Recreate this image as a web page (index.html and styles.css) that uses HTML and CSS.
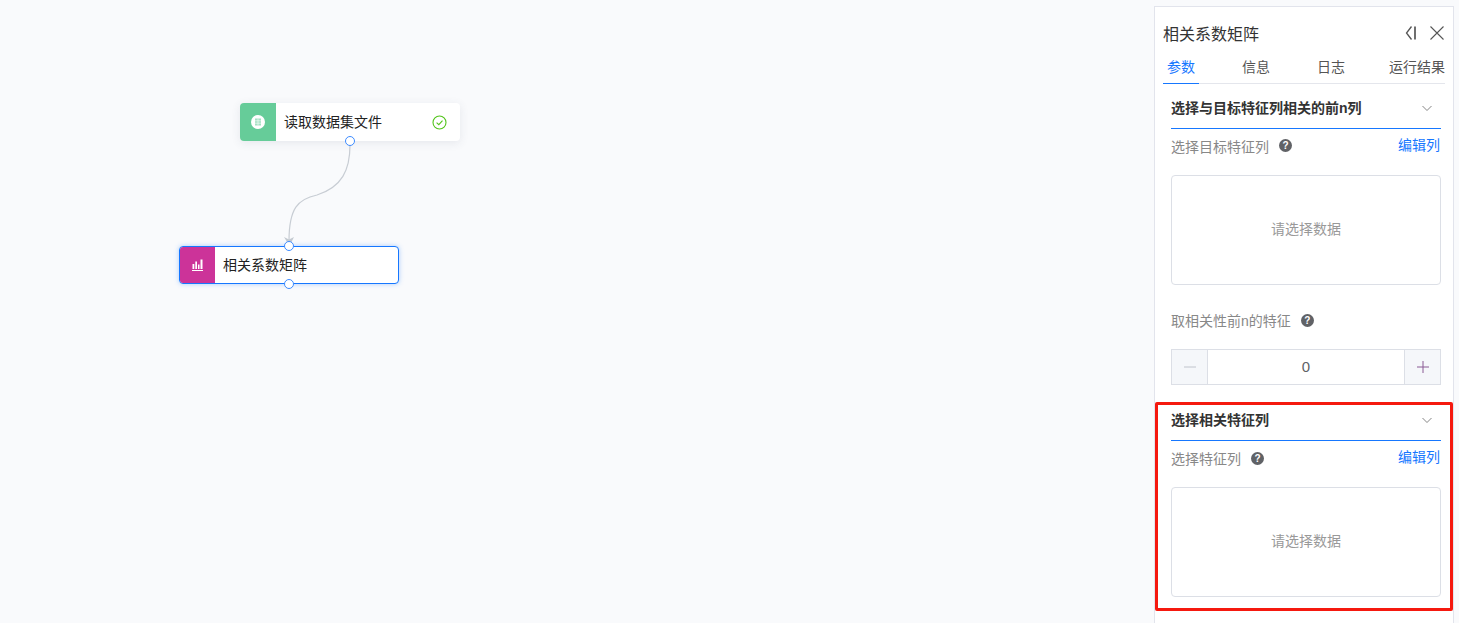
FILE: index.html
```html
<!DOCTYPE html>
<html lang="zh-CN">
<head>
  <meta charset="UTF-8">
  <title>相关系数矩阵</title>
  <link rel="stylesheet" href="styles.css">
</head>
<body>
  <div class="canvas">
    <svg class="edges" width="1154" height="623">
      <path d="M350 145 C350 170 342 187 317 195 C298 199 289 208 289 241" fill="none" stroke="#c8cdd4" stroke-width="1.200"/>
      <path d="M284 237 L289 239.500 L294 237 L289.500 246 Z" fill="#c3c9d0"/>
    </svg>

    <div class="node node-read">
      <div class="node-icon green">
        <svg width="14" height="14" viewBox="0 0 14 14">
          <circle cx="7" cy="7" r="7" fill="#fff"/>
          <rect x="4" y="3.500" width="6" height="7" fill="#a3e0c2"/>
          <path d="M4 5.800H10M4 8.200H10M7 3.500V10.500" stroke="#fff" stroke-width="0.600"/>
        </svg>
      </div>
      <span class="node-name">读取数据集文件</span>
      <svg class="node-status" width="15" height="15" viewBox="0 0 15 15">
        <circle cx="7.500" cy="7.500" r="6.500" fill="none" stroke="#52c41a" stroke-width="1.100"/>
        <path d="M4.600 7.700 L6.800 9.700 L10.500 5.600" fill="none" stroke="#52c41a" stroke-width="1.100"/>
      </svg>
      <i class="port port-bottom"></i>
    </div>

    <div class="node node-corr selected">
      <div class="node-icon magenta">
        <svg width="11" height="12" viewBox="0 0 11 12">
          <path d="M0 11.500H11" stroke="#fff" stroke-width="1"/>
          <path d="M0.500 5H2.300V10H0.500ZM3.300 2.500H5V10H3.300ZM6 5.500H7.500V10H6ZM8.500 0.500H10.500V10H8.500Z" fill="#fff"/>
        </svg>
      </div>
      <span class="node-name">相关系数矩阵</span>
      <i class="port port-top"></i>
      <i class="port port-bottom"></i>
    </div>
  </div>

  <div class="panel">
    <div class="panel-head">
      <span class="panel-title">相关系数矩阵</span>
      <div class="panel-actions">
        <svg width="12" height="14" viewBox="0 0 12 14">
          <path d="M6.500 0.500 L1.500 7 L6.500 13.500" fill="none" stroke="#555" stroke-width="1.300"/>
          <path d="M10 0.500V13.500" stroke="#555" stroke-width="1.700"/>
        </svg>
        <svg width="16" height="16" viewBox="0 0 16 16">
          <path d="M1.500 1.500 L14.500 14.500 M14.500 1.500 L1.500 14.500" stroke="#555" stroke-width="1.100"/>
        </svg>
      </div>
    </div>

    <div class="tabs">
      <span class="tab active">参数</span>
      <span class="tab">信息</span>
      <span class="tab">日志</span>
      <span class="tab last">运行结果</span>
    </div>

    <div class="section">
      <div class="section-head">
        <span>选择与目标特征列相关的前n列</span>
        <svg class="chevron" width="12" height="12" viewBox="0 0 12 12"><path d="M1.500 4 L6 8.500 L10.500 4" fill="none" stroke="#777" stroke-width="0.900"/></svg>
      </div>
      <div class="field-label">
        <span>选择目标特征列</span><i class="help">?</i>
        <a class="edit-link">编辑列</a>
      </div>
      <div class="empty-box">请选择数据</div>

      <div class="field-label second">
        <span>取相关性前n的特征</span><i class="help">?</i>
      </div>
      <div class="stepper">
        <div class="step-btn minus"><svg width="14" height="14" viewBox="0 0 14 14"><path d="M1 7H13" stroke="#c0c4cc" stroke-width="1"/></svg></div>
        <div class="step-value">0</div>
        <div class="step-btn plus"><svg width="14" height="14" viewBox="0 0 14 14"><path d="M1 7H13M7 1V13" stroke="#8a5a94" stroke-width="1"/></svg></div>
      </div>
    </div>

    <div class="section section-next">
      <div class="section-head">
        <span>选择相关特征列</span>
        <svg class="chevron" width="12" height="12" viewBox="0 0 12 12"><path d="M1.500 4 L6 8.500 L10.500 4" fill="none" stroke="#777" stroke-width="0.900"/></svg>
      </div>
      <div class="field-label">
        <span>选择特征列</span><i class="help">?</i>
        <a class="edit-link">编辑列</a>
      </div>
      <div class="empty-box">请选择数据</div>
    </div>

    <div class="highlight-box"></div>
  </div>
</body>
</html>
```

FILE: styles.css
```css
* { box-sizing: border-box; }
html, body {
  margin: 0;
  height: 100%;
}
body {
  display: flex;
  overflow: hidden;
  background: #f9fafc;
  font-family: "Liberation Sans", "Noto Sans CJK SC", sans-serif;
  font-size: 14px;
  color: #333;
}

/* canvas */
.canvas {
  position: relative;
  flex: 0 0 1154px;
  height: 623px;
}
.edges {
  position: absolute;
  left: 0;
  top: 0;
}
.node {
  position: absolute;
  width: 220px;
  height: 38px;
  display: flex;
  align-items: center;
  background: #fff;
  border-radius: 4px;
  box-shadow: 0 2px 10px rgba(60,70,100,0.1);
}
.node-read { left: 240px; top: 103px; }
.node-corr { left: 179px; top: 246px; }
.node.selected {
  border: 1px solid #1677ff;
  box-shadow: 0 0 5px rgba(22,119,255,0.35);
}
.node-icon {
  flex: 0 0 36px;
  height: 100%;
  display: flex;
  align-items: center;
  justify-content: center;
  border-radius: 4px 0 0 4px;
}
.selected .node-icon { flex-basis: 35px; border-radius: 3px 0 0 3px; }
.green { background: #66cc99; }
.magenta { background: #cc3399; }
.node-name {
  margin-left: 8px;
  color: #222;
  line-height: 20px;
}
.node-status {
  margin-left: auto;
  margin-right: 13px;
}
.port {
  position: absolute;
  left: 50%;
  width: 10px;
  height: 10px;
  margin-left: -5px;
  background: #fff;
  border: 1.300px solid #3d8bff;
  border-radius: 50%;
}
.port-top { top: -6px; }
.port-bottom { bottom: -5px; }
.selected .port-bottom { bottom: -6px; }

/* side panel */
.panel {
  position: relative;
  flex: 0 0 300px;
  margin-top: 6px;
  padding: 0 8px;
  background: #fff;
  border: 1px solid #e2e4ec;
  border-bottom: none;
}
.panel-head {
  height: 53px;
  display: flex;
  align-items: center;
  justify-content: space-between;
}
.panel-title {
  font-size: 16px;
  color: #333;
  margin-top: -2px;
}
.panel-actions {
  display: flex;
  align-items: center;
  gap: 12px;
  margin-top: -1px;
}
.tabs {
  display: flex;
  gap: 39px;
  height: 24px;
  border-bottom: 1px solid #e4e6ec;
  color: #555;
}
.tab {
  width: 36px;
  height: 24px;
  padding: 0 4px;
  line-height: 14px;
  text-align: center;
  white-space: nowrap;
}
.tab.active {
  color: #1677ff;
  border-bottom: 1px solid #1677ff;
}
.tab.last { width: 56px; padding: 0; margin-left: 1px; }

.section { padding: 0 4px 0 8px; }
.section-head {
  height: 45px;
  display: flex;
  align-items: center;
  justify-content: space-between;
  padding: 2px 8px 0 0;
  border-bottom: 1px solid #1677ff;
  font-weight: bold;
  color: #333;
}
.chevron { margin-top: 2px; }
.field-label {
  height: 33px;
  display: flex;
  align-items: center;
  color: #888;
}
.field-label.second {
  height: 20px;
  margin-top: 25px;
}
.help {
  width: 13px;
  height: 13px;
  margin-left: 10px;
  border-radius: 50%;
  background: #606266;
  color: #fff;
  font-style: normal;
  font-size: 10px;
  font-weight: bold;
  line-height: 13px;
  text-align: center;
}
.edit-link {
  margin-left: auto;
  margin-right: 1px;
  margin-top: -4px;
  color: #1677ff;
}
.empty-box {
  height: 110px;
  margin-top: 13px;
  padding-bottom: 4px;
  display: flex;
  align-items: center;
  justify-content: center;
  border: 1px solid #dcdfe6;
  border-radius: 4px;
  color: #999;
}
.stepper {
  height: 36px;
  margin-top: 19px;
  display: flex;
  border: 1px solid #dcdfe6;
}
.step-btn {
  flex: 0 0 36px;
  display: flex;
  align-items: center;
  justify-content: center;
  background: #f5f7fa;
}
.minus { border-right: 1px solid #dcdfe6; }
.plus { border-left: 1px solid #dcdfe6; }
.step-value {
  flex: 1;
  text-align: center;
  font-size: 15px;
  line-height: 34px;
  color: #606266;
}
.section-next { margin-top: 14px; }
.section-next .section-head { height: 42px; padding: 0 8px 2px 0; }
.section-next .field-label { height: 34px; }
.section-next .empty-box { margin-top: 12px; }

/* red annotation on top of the screenshot */
.highlight-box {
  position: absolute;
  left: 0;
  top: 395px;
  width: 298px;
  height: 209px;
  border: 3px solid #f5190f;
  border-radius: 2px;
}
```
